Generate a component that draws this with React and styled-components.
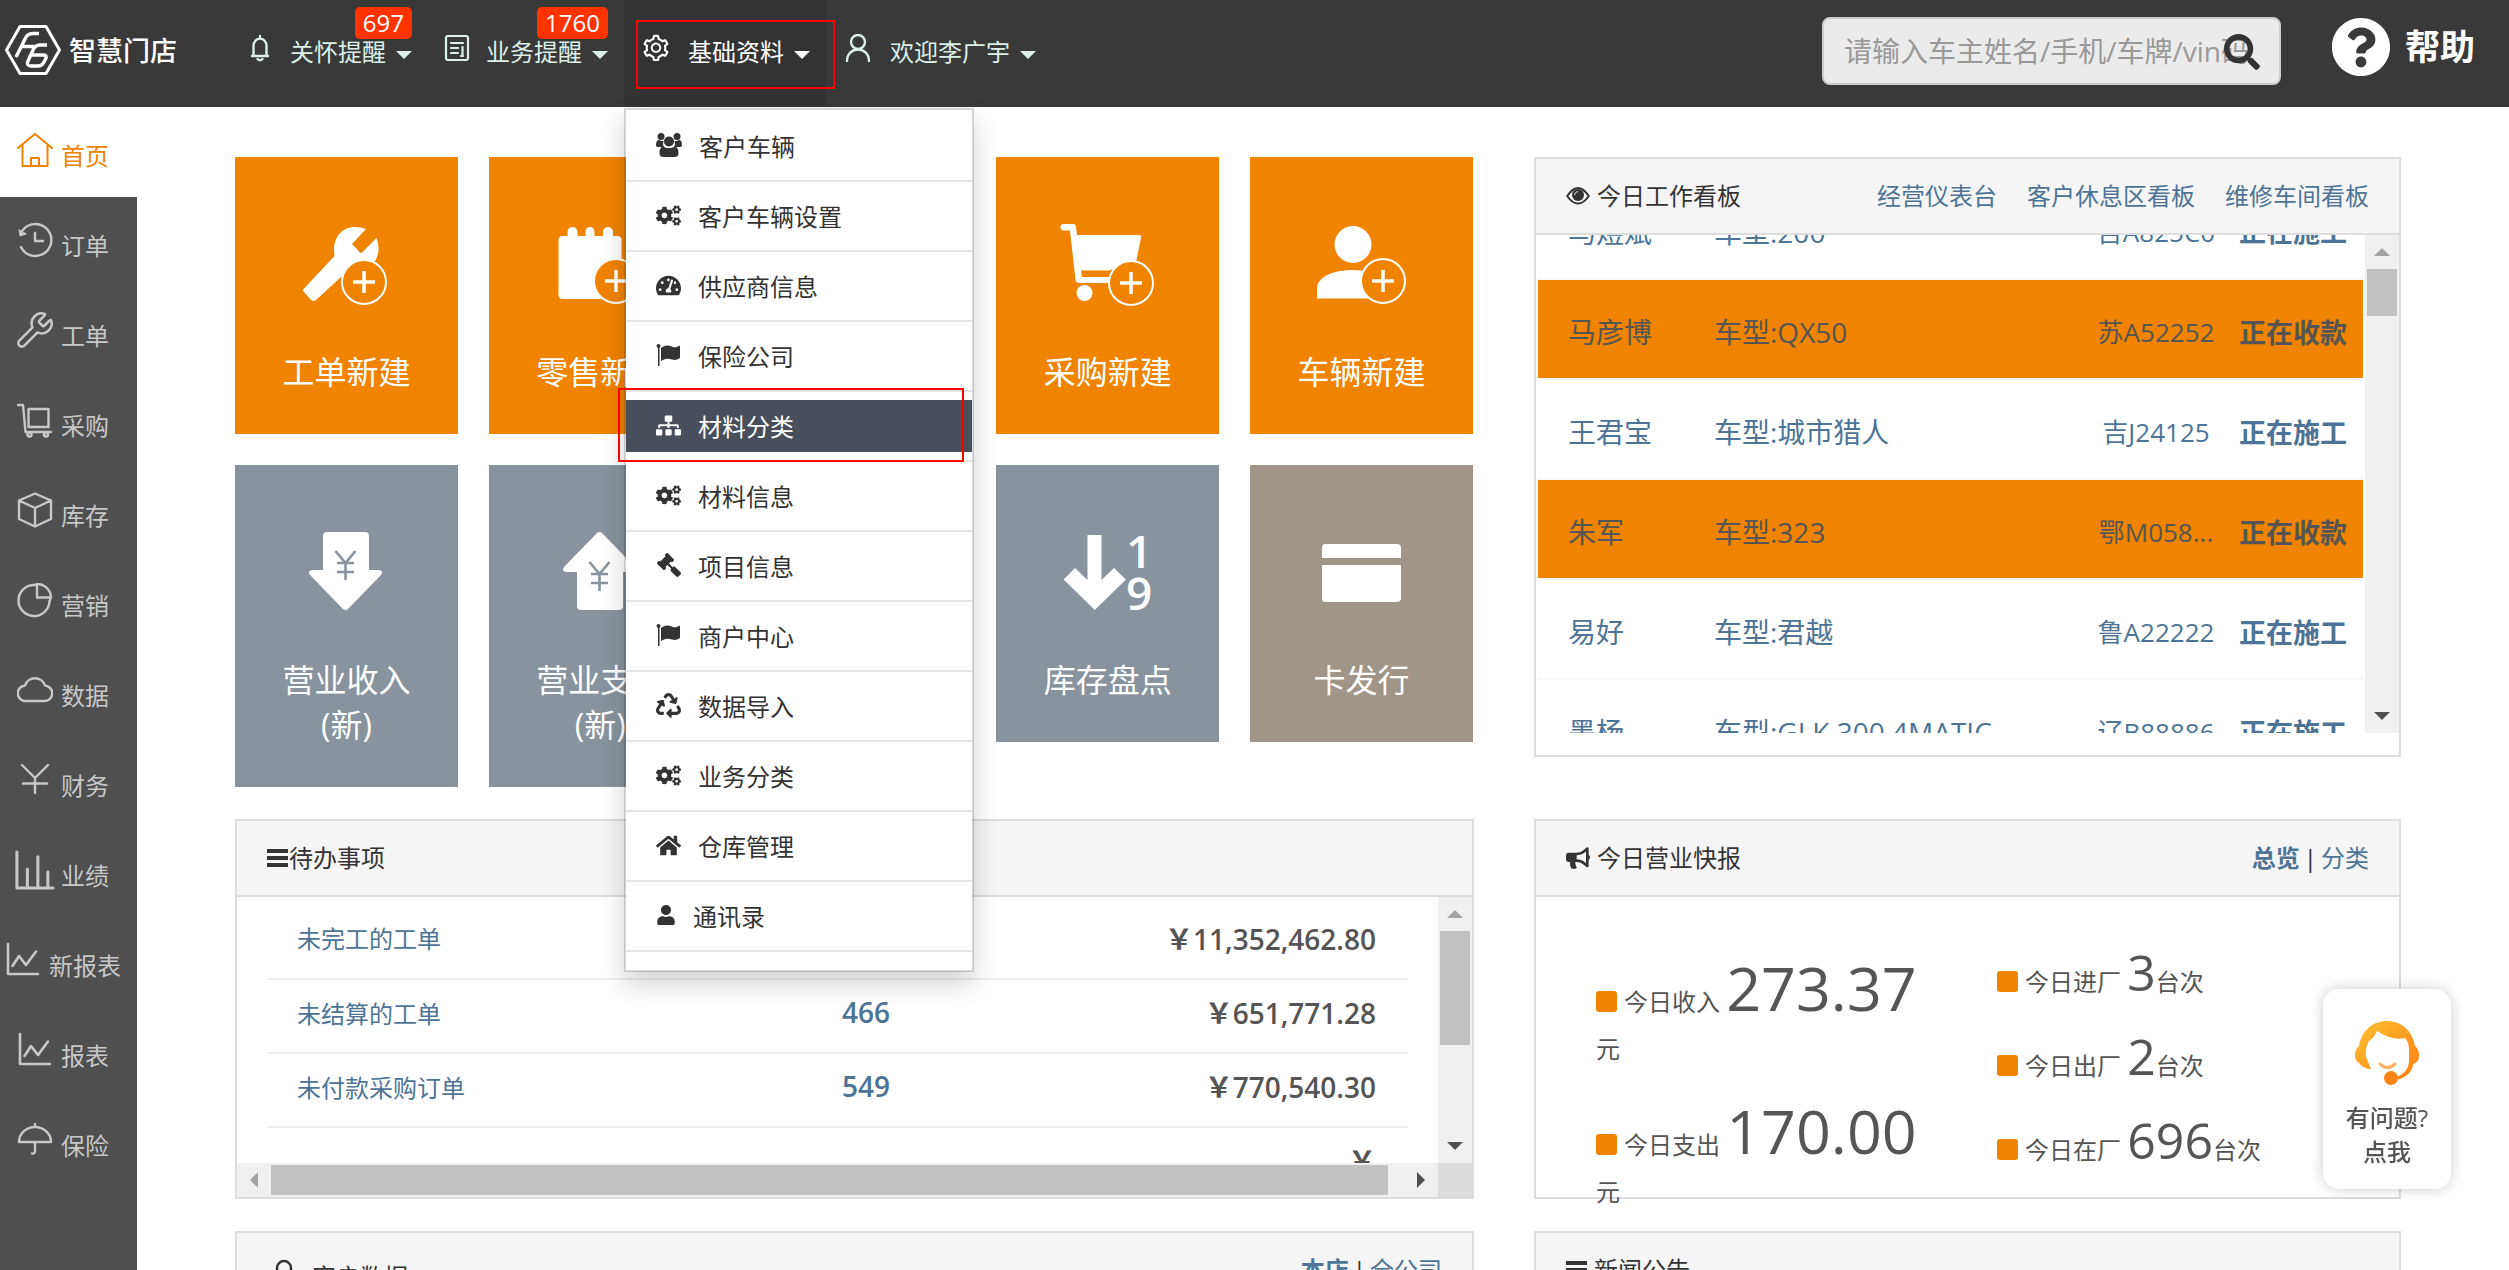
import React, {useLayoutEffect, useRef} from 'react'
import styled, {createGlobalStyle, css} from 'styled-components'
import {
  FaCogs,
  FaTachometerAlt,
  FaSitemap,
  FaGavel,
  FaRecycle,
  FaHome,
  FaUser,
  FaBullhorn,
  FaSearch,
  FaQuestionCircle,
} from 'react-icons/fa'
import {AiOutlineSetting} from 'react-icons/ai'
import {Wrench} from 'lucide-react'

const orange = '#f08300'
const slate = '#88939d'
const taupe = '#9f9689'
const link = '#4d7496'

/* ---------- icons ---------- */

const Line = ({size = 36, w = 2.4, box = 36, children}) => (
  <svg
    width={size}
    height={size}
    viewBox={`0 0 ${box} ${box}`}
    fill="none"
    stroke="currentColor"
    strokeWidth={w}
    strokeLinecap="round"
    strokeLinejoin="round"
    aria-hidden="true"
  >
    {children}
  </svg>
)

const Solid = ({width = 25, height = 24, children}) => (
  <svg
    width={width}
    height={height}
    viewBox={`0 0 ${width} ${height}`}
    fill="currentColor"
    aria-hidden="true"
  >
    {children}
  </svg>
)

const BellIcon = () => (
  <Line size={28} box={28} w={2.4}>
    <path d="M6 22h16M7.500 22V12a6.500 7.500 0 0 1 13 0v10M14 4.500V2M11.500 25q2.500 2.500 5 0" />
  </Line>
)

const DocIcon = () => (
  <Line size={26} box={26} w={2.2}>
    <rect x="2" y="1" width="22" height="24" rx="2" />
    <path d="M7 8h12M7 13h7M7 18h7M18.500 12v9M17 21h2" />
  </Line>
)

const PersonIcon = () => (
  <Line size={28} box={28} w={2.4}>
    <ellipse cx="14" cy="8" rx="7" ry="7" />
    <path d="M3 27c0-7 5-11.500 11-11.500S25 20 25 27" />
  </Line>
)

const HomeIcon = () => (
  <Line w={2}>
    <path d="M1 16 18 2l17 14M5.500 13v21h25V13M14 34v-8h8v8" />
  </Line>
)

const HistoryIcon = () => (
  <Line>
    <path d="M4 11a16 16 0 1 1 0 14M18 11v8h8" />
    <path d="M2 8l1 6 6-2z" fill="currentColor" strokeWidth="1" />
  </Line>
)

const TrolleyIcon = () => (
  <Line>
    <path d="M1 3h5l2.500 27H34M11.500 7h20v18h-20z" />
    <circle cx="12.500" cy="32.500" r="2" />
    <circle cx="29" cy="32.500" r="2" />
  </Line>
)

const CubeIcon = () => (
  <Line>
    <path d="M18 1.500 34 8.500V27l-16 7.500L2 27V8.500zM2 8.500 18 16l16-7.500M18 16v18" />
  </Line>
)

const PieIcon = () => (
  <Line>
    <path d="M17 3a15.500 15.500 0 1 0 15.500 16.500" />
    <path d="M20 2v13.500h14A14 14 0 0 0 20 2zM20 2.500A15 15 0 0 0 17 3M32.500 19.500q1-2 1-4" />
  </Line>
)

const CloudIcon = () => (
  <Line>
    <path d="M9 29a7.500 7.500 0 0 1-1-15.500 10.500 10.500 0 0 1 20 0A7.500 7.500 0 0 1 27 29z" />
  </Line>
)

const YenIcon = () => (
  <Line>
    <path d="M5 3l13 13L31 3M18 16v15M6 21.500h24" />
  </Line>
)

const BarsChartIcon = () => (
  <Line size={42} box={42} w={3.2}>
    <path d="M2 2v38h38M13 20v18M24 7v31M34.500 23v15" />
  </Line>
)

const LineChartIcon = () => (
  <Line w={2.6}>
    <path d="M3 2v30h30M7.500 24l6.500-10 7 9L31 9.500" />
  </Line>
)

const UmbrellaIcon = () => (
  <Line>
    <path d="M2 20a16 15 0 0 1 32 0zM18 2v3M18 20v9q0 3-3 2.500" />
  </Line>
)

const UsersIcon = () => (
  <Solid width={26}>
    <circle cx="5" cy="3.500" r="3.500" />
    <circle cx="21" cy="3.500" r="3.500" />
    <path d="M0 12c0-3 1-5 3-5 2 1 3 1 4.500 1L7 11c0 1 .5 2 1 3H2c-1.500 0-2-1-2-2zM26 12c0-3-1-5-3-5-2 1-3 1-4.500 1l.5 3c0 1-.5 2-1 3h6c1.500 0 2-1 2-2z" />
    <circle cx="13" cy="8.500" r="5" />
    <path d="M3.500 20c0-4 1.500-6.500 4-6.500 3 2 8 2 11 0 2.500 0 4 2.500 4 6.500 0 3-1.500 4-4 4h-11c-2.500 0-4-1-4-4z" />
  </Solid>
)

const FlagIcon = () => (
  <Solid>
    <circle cx="2.500" cy="3" r="2" />
    <path d="M2 4h1.500v19H2zM5 5c6-4 9-2 12-1 2 .8 4 0 7-1.500V15c-3 2-5 2.500-8 1.500S10 15 5 18z" />
  </Solid>
)

const HammerIcon = () => (
  <svg width="25" height="24" viewBox="0 0 25 24" fill="currentColor" aria-hidden="true">
    <g transform="matrix(-1 0 0 1 25 0)">
      <FaGavel size={24} />
    </g>
  </svg>
)

const EyeIcon = () => (
  <Solid width={24} height={20}>
    <path
      d="M1.200 10C6 3 9 2 12 2s6 1 10.800 8C18 17 15 17.500 12 17.500S6 17 1.200 10z"
      fill="none"
      stroke="currentColor"
      strokeWidth="2"
    />
    <circle cx="12" cy="9" r="6" />
    <path d="M8.700 9c0-2 1.300-3.300 3.300-3.300" fill="none" stroke="#f5f5f5" />
  </Solid>
)

const MenuBarsIcon = () => (
  <Solid width={21} height={20}>
    <path d="M0 1h21v4H0zM0 8h21v4H0zM0 15h21v4H0z" />
  </Solid>
)

const LogoIcon = () => (
  <svg width="56" height="50" viewBox="0 0 56 50" fill="none" stroke="#fff" aria-hidden="true">
    <path d="M15 1.500h26L54.500 25 41 48.500H15L1.500 25z" strokeWidth="3" strokeLinejoin="round" />
    <path d="M34 8.500h-6q-6 0-8 5.500L11 32M16 21.500h13" strokeWidth="3.400" />
    <path
      d="M42 20h-7q-5 0-7 5l-5 11q-2 5 3 5h7q4 0 6-4l2-4q1-3-3-3H25"
      strokeWidth="3.400"
    />
  </svg>
)

const Plus = ({x, y, r = 22}) => (
  <>
    <circle cx={x} cy={y} r={r} fill={orange} stroke="#fff" strokeWidth="2" />
    <path d={`M${x - 11} ${y}h22M${x} ${y - 11}v22`} stroke="#fff" strokeWidth="3.500" />
  </>
)

const TileArt = ({children}) => (
  <svg
    width="96"
    height="80"
    viewBox="0 0 96 80"
    fill="#fff"
    overflow="visible"
    aria-hidden="true"
  >
    {children}
  </svg>
)

const WrenchArt = () => (
  <TileArt>
    <path d="M5.500 63 36.500 30C34 14 42 1 57 1q6 0 11 2L54 18l9 9.600L78.500 12q5 13-2 24L43 51 18 74q-2 2-5 0L6 66q-2-1.500-.5-3z" />
    <Plus x={66} y={56} />
  </TileArt>
)

const CalendarArt = () => (
  <TileArt>
    <rect x="6.500" y="10" width="63" height="63" rx="4" />
    <rect x="15.500" y="1" width="10" height="14" rx="5" />
    <rect x="33.500" y="1" width="9" height="14" rx="4.500" />
    <rect x="51" y="1" width="10" height="14" rx="5" />
    <Plus x={64} y={55} />
  </TileArt>
)

const CartArt = () => (
  <TileArt>
    <path d="M3.500-2H13q3 0 3 3l1 8h62q3 0 2 3l-5 24-27 8.500H21l1 6.500h27V57H19q-3 0-3.500-3L10 4.500H3.500q-3 0-3-3.200T3.500-2z" />
    <circle cx="24.500" cy="67" r="8" />
    <Plus x={71} y={57} />
  </TileArt>
)

const CustomerArt = () => (
  <TileArt>
    <circle cx="39" cy="18.500" r="18.500" />
    <path d="M3 72.500V61C5 50 20 44 39 44q9 0 16 2l8 26.500z" />
    <Plus x={69} y={55} />
  </TileArt>
)

const YuanSign = ({y}) => (
  <path
    d={`M37.500 ${y}l10 12 10-12M47.500 ${y + 12}v17M39 ${y + 12}h17M39 ${y + 21}h17`}
    fill="none"
    stroke={slate}
    strokeWidth="2.600"
  />
)

const IncomeArt = () => (
  <TileArt>
    <path d="M29-2h38q4 0 4 4v34h10q5 1 2 5L50 75q-2.500 2-5 0L12 41q-3-4 2-5h11V2q0-4 4-4z" />
    <YuanSign y={17} />
  </TileArt>
)

const ExpenseArt = () => (
  <TileArt>
    <path d="M29 76h38q4 0 4-4V38h10q5-1 2-5L50-1q-2.500-2-5 0L12 33q-3 4 2 5h11v34q0 4 4 4z" />
    <YuanSign y={28} />
  </TileArt>
)

const StockArt = () => (
  <TileArt>
    <path d="M27.500 1h14v45L54 34l12 11.500L34.800 76 3.600 45.500 15 34l12.500 12z" />
    <SvgDigit x="66" y="34">
      1
    </SvgDigit>
    <SvgDigit x="66" y="76">
      9
    </SvgDigit>
  </TileArt>
)

const CardArt = () => (
  <TileArt>
    <path d="M11 10h72q4 0 4 4v10H8V14q0-4 3-4zM8 31h79v33q0 4-4 4H11q-3 0-3-4z" />
  </TileArt>
)

const HeadsetArt = () => (
  <svg width="64" height="64" viewBox="0 0 64 64" fill="none" aria-hidden="true">
    <defs>
      <linearGradient id="hair" x1="0" y1="0" x2="1" y2="1">
        <stop offset="0" stopColor="#ffc233" />
        <stop offset="1" stopColor="#ff7d12" />
      </linearGradient>
    </defs>
    <path
      d="M4 25C7 9 18 0 32 0s25 9 28 25q4 3 4 9 0 8-6 9-1 12-17 16v-3q12-4 13-15V28q0-6-4-11-13 3-28-7-3 7-8 10-4 6-3 16l5 12q-7 0-12-6-4-2-4-8 0-6 4-9z"
      fill="url(#hair)"
    />
    <path d="M25 43q7 7 15 0" stroke="#ffb061" strokeWidth="3" strokeLinecap="round" />
    <circle cx="36" cy="57" r="7" fill="#ff8417" />
  </svg>
)

/* ---------- data ---------- */

const sideItems = [
  {text: '首页', Icon: HomeIcon, active: true},
  {text: '订单', Icon: HistoryIcon},
  {text: '工单', Icon: () => <Wrench size={40} strokeWidth={1.5} />},
  {text: '采购', Icon: TrolleyIcon},
  {text: '库存', Icon: CubeIcon},
  {text: '营销', Icon: PieIcon},
  {text: '数据', Icon: CloudIcon},
  {text: '财务', Icon: YenIcon},
  {text: '业绩', Icon: BarsChartIcon},
  {text: '新报表', Icon: LineChartIcon},
  {text: '报表', Icon: LineChartIcon},
  {text: '保险', Icon: UmbrellaIcon},
]

const menuItems = [
  {text: '客户车辆', Icon: UsersIcon},
  {text: '客户车辆设置', Icon: FaCogs},
  {text: '供应商信息', Icon: FaTachometerAlt},
  {text: '保险公司', Icon: FlagIcon},
  {text: '材料分类', Icon: FaSitemap, active: true},
  {text: '材料信息', Icon: FaCogs},
  {text: '项目信息', Icon: HammerIcon},
  {text: '商户中心', Icon: FlagIcon},
  {text: '数据导入', Icon: FaRecycle},
  {text: '业务分类', Icon: FaCogs},
  {text: '仓库管理', Icon: FaHome},
  {text: '通讯录', Icon: FaUser},
]

const tiles = [
  {lines: ['工单新建'], Art: WrenchArt, color: orange},
  {lines: ['零售新建'], Art: CalendarArt, color: orange},
  null,
  {lines: ['采购新建'], Art: CartArt, color: orange},
  {lines: ['车辆新建'], Art: CustomerArt, color: orange},
  {lines: ['营业收入', '(新)'], Art: IncomeArt, color: slate},
  {lines: ['营业支出', '(新)'], Art: ExpenseArt, color: slate},
  null,
  {lines: ['库存盘点'], Art: StockArt, color: slate},
  {lines: ['卡发行'], Art: CardArt, color: taupe},
]

const boardRows = [
  {name: '马煜斌', model: '200', plate: '吉A825C0', status: '正在施工'},
  {name: '马彦博', model: 'QX50', plate: '苏A52252', status: '正在收款', paying: true},
  {name: '王君宝', model: '城市猎人', plate: '吉J24125', status: '正在施工'},
  {name: '朱军', model: '323', plate: '鄂M058...', status: '正在收款', paying: true},
  {name: '易好', model: '君越', plate: '鲁A22222', status: '正在施工'},
  {name: '墨杨', model: 'GLK 300 4MATIC', plate: '辽B88886', status: '正在施工'},
]

const todoRows = [
  {name: '未完工的工单', count: '', amount: '￥11,352,462.80'},
  {name: '未结算的工单', count: '466', amount: '￥651,771.28'},
  {name: '未付款采购订单', count: '549', amount: '￥770,540.30'},
  {name: '', count: '', amount: '￥'},
]

const moneyStats = [
  {label: '今日收入', value: '273.37'},
  {label: '今日支出', value: '170.00'},
]

const visitStats = [
  {label: '今日进厂', value: '3'},
  {label: '今日出厂', value: '2'},
  {label: '今日在厂', value: '696'},
]

/* ---------- page ---------- */

const ScrollBarY = ({thumb}) => (
  <TrackY>
    <ScrollButton aria-label="向上">
      <Arrow $dir="up" $dim />
    </ScrollButton>
    <ThumbY $size={thumb} />
    <ScrollButton $end aria-label="向下">
      <Arrow $dir="down" />
    </ScrollButton>
  </TrackY>
)

const NavEntry = ({icon, iconWidth, text, badge, active, children}) => (
  <NavItem $active={active}>
    <NavButton>
      <NavIcon $width={iconWidth}>{icon}</NavIcon>
      <NavText>{text}</NavText>
      <Caret />
    </NavButton>
    {badge && <Badge>{badge}</Badge>}
    {children}
  </NavItem>
)

const SettingsMenu = () => (
  <Menu>
    {menuItems.map(({text, Icon, active}) => (
      <MenuRow key={text}>
        <MenuLink href="#" $active={active}>
          <Icon size={text === '通讯录' ? 20 : 25} />
          {text}
        </MenuLink>
        {active && <MenuMark />}
      </MenuRow>
    ))}
  </Menu>
)

const WorkBoard = () => {
  const viewport = useRef(null)

  useLayoutEffect(() => {
    viewport.current.scrollTop = 56
  }, [])

  return (
    <Panel>
      <PanelHeader>
        <PanelTitle>
          <EyeIcon />
          今日工作看板
        </PanelTitle>
        <HeaderLinks>
          <TextLink href="#">经营仪表台</TextLink>
          <TextLink href="#">客户休息区看板</TextLink>
          <TextLink href="#">维修车间看板</TextLink>
        </HeaderLinks>
      </PanelHeader>
      <BoardBody>
        <BoardViewport ref={viewport}>
          <BoardTable>
            <tbody>
              {boardRows.map(row => (
                <BoardRow key={row.name} $paying={row.paying}>
                  <NameCell>{row.name}</NameCell>
                  <BoardCell>车型:{row.model}</BoardCell>
                  <PlateCell>{row.plate}</PlateCell>
                  <StatusCell>{row.status}</StatusCell>
                </BoardRow>
              ))}
            </tbody>
          </BoardTable>
        </BoardViewport>
        <ScrollBarY thumb={47} />
      </BoardBody>
    </Panel>
  )
}

const TodoPanel = () => (
  <Panel>
    <PanelHeader>
      <PanelTitle $tight>
        <MenuBarsIcon />
        待办事项
      </PanelTitle>
    </PanelHeader>
    <TodoBody>
      <TodoViewport>
        <TodoTable>
          <tbody>
            {todoRows.map(row => (
              <tr key={row.amount}>
                <TodoName>{row.name && <TextLink href="#">{row.name}</TextLink>}</TodoName>
                <TodoCount>{row.count}</TodoCount>
                <TodoAmount>{row.amount}</TodoAmount>
              </tr>
            ))}
          </tbody>
        </TodoTable>
      </TodoViewport>
      <ScrollBarY thumb={114} />
    </TodoBody>
    <TrackX>
      <ScrollButton aria-label="向左">
        <Arrow $dir="left" $dim />
      </ScrollButton>
      <TrackRail>
        <ThumbX />
      </TrackRail>
      <ScrollButton aria-label="向右">
        <Arrow $dir="right" />
      </ScrollButton>
      <Corner />
    </TrackX>
  </Panel>
)

const DailyPanel = () => (
  <Panel>
    <PanelHeader>
      <PanelTitle>
        <FaBullhorn size={24} />
        今日营业快报
      </PanelTitle>
      <Switcher>
        <TextLink href="#" $bold>
          总览
        </TextLink>
        <span>|</span>
        <TextLink href="#">分类</TextLink>
      </Switcher>
    </PanelHeader>
    <DailyBody>
      <MoneyColumn>
        {moneyStats.map(({label, value}) => (
          <Stat key={label}>
            <Dot />
            {label} <Money>{value}</Money> 元
          </Stat>
        ))}
      </MoneyColumn>
      <VisitColumn>
        {visitStats.map(({label, value}) => (
          <Stat key={label}>
            <Dot />
            {label} <Visits>{value}</Visits>
            台次
          </Stat>
        ))}
      </VisitColumn>
    </DailyBody>
  </Panel>
)

export default function App() {
  return (
    <Page>
      <GlobalStyle />
      <TopBar>
        <Brand href="#">
          <LogoIcon />
          智慧门店
        </Brand>
        <Nav>
          <NavEntry icon={<BellIcon />} iconWidth={28} text="关怀提醒" badge="697" />
          <NavEntry icon={<DocIcon />} iconWidth={26} text="业务提醒" badge="1760" />
          <NavEntry icon={<AiOutlineSetting size={30} />} iconWidth={32} text="基础资料" active>
            <SettingsMenu />
            <NavMark />
          </NavEntry>
          <NavEntry icon={<PersonIcon />} iconWidth={32} text="欢迎李广宇" />
        </Nav>
        <SearchBox>
          <SearchInput
            type="text"
            aria-label="搜索"
            placeholder="请输入车主姓名/手机/车牌/vin码"
          />
          <SearchButton aria-label="搜索">
            <FaSearch size={36} />
          </SearchButton>
        </SearchBox>
        <Help href="#">
          <FaQuestionCircle size={60} />
          帮助
        </Help>
      </TopBar>
      <Content>
        <Sidebar>
          {sideItems.map(({text, Icon, active}) => (
            <SideLink key={text} href="#" $active={active}>
              <SideIcon>
                <Icon />
              </SideIcon>
              <SideText>{text}</SideText>
            </SideLink>
          ))}
        </Sidebar>
        <Dashboard>
          <Tiles>
            {tiles.map((tile, i) =>
              tile ? (
                <Tile key={tile.lines[0]} $color={tile.color}>
                  <tile.Art />
                  <TileText>
                    {tile.lines.map(line => (
                      <span key={line}>{line}</span>
                    ))}
                  </TileText>
                </Tile>
              ) : (
                <EmptySlot key={i} />
              ),
            )}
          </Tiles>
          <WorkBoard />
          <TodoPanel />
          <DailyPanel />
          <Panel>
            <PanelHeader>
              <PanelTitle $low>
                <Line size={38} box={38} w={2.4}>
                  <circle cx="17" cy="17" r="7" />
                  <path d="M8 37c0-7 4-12 9-12s9 5 9 12" />
                </Line>
                客户数据
              </PanelTitle>
              <Switcher>
                <TextLink href="#" $bold>
                  本店
                </TextLink>
                <span>|</span>
                <TextLink href="#">全公司</TextLink>
              </Switcher>
            </PanelHeader>
            <BlankBody />
          </Panel>
          <Panel>
            <PanelHeader>
              <PanelTitle>
                <MenuBarsIcon />
                新闻公告
              </PanelTitle>
            </PanelHeader>
            <BlankBody />
          </Panel>
        </Dashboard>
      </Content>
      <Support>
        <HeadsetArt />
        <SupportText>
          <span>有问题?</span>
          <span>点我</span>
        </SupportText>
      </Support>
    </Page>
  )
}

/* ---------- styles ---------- */

const GlobalStyle = createGlobalStyle`
  * {
    box-sizing: border-box;
  }
  body {
    margin: 0;
    background-color: #fff;
    color: #333;
    font-family: 'Open Sans', 'Noto Sans CJK SC', sans-serif;
    font-size: 24px;
  }
  button {
    font-family: inherit;
    font-size: inherit;
    border: 0;
    padding: 0;
    cursor: pointer;
  }
  a {
    text-decoration: none;
  }
`

const Page = styled.div`
  display: flex;
  flex-direction: column;
  height: 100vh;
  overflow: hidden;
`

const TopBar = styled.header`
  display: flex;
  flex-shrink: 0;
  height: 107px;
  padding-right: 34px;
  background-color: #393939;
  position: relative;
  z-index: 2;
`

const Brand = styled.a`
  display: flex;
  align-items: center;
  gap: 8px;
  width: 230px;
  height: 99px;
  padding-left: 5px;
  color: #fff;
  font-size: 27px;
  font-weight: 500;
`

const Nav = styled.ul`
  display: flex;
  flex: 1;
  margin: 0;
  padding: 0;
  list-style: none;
`

const NavItem = styled.li`
  position: relative;
  color: ${props => (props.$active ? '#fff' : '#dcefe8')};
  background-color: ${props => (props.$active ? '#333' : 'transparent')};
`

const NavButton = styled.button`
  display: flex;
  align-items: center;
  height: 100px;
  padding: 0 16px;
  color: inherit;
  background-color: transparent;
`

const NavIcon = styled.span`
  display: flex;
  justify-content: center;
  width: ${props => props.$width}px;
  margin-right: 16px;
  padding-bottom: 4px;
`

const NavText = styled.span`
  margin-right: 10px;
  white-space: nowrap;
`

const Caret = styled.span`
  margin-top: 10px;
  border: 8px solid transparent;
  border-top-color: currentColor;
  border-bottom: 0;
`

const Badge = styled.span`
  position: absolute;
  top: 7px;
  right: 16px;
  padding: 0 8px;
  border-radius: 5px;
  background-color: #ff3300;
  color: #fff;
  line-height: 32px;
`

const redMark = css`
  position: absolute;
  border: 2px solid #f00;
  pointer-events: none;
`

const NavMark = styled.div`
  ${redMark}
  top: 20px;
  left: 12px;
  width: 199px;
  height: 69px;
  z-index: 1;
`

const Menu = styled.ul`
  position: absolute;
  top: 108px;
  left: 0;
  width: 350px;
  margin: 0;
  padding: 2px 0 18px;
  list-style: none;
  background-color: #fff;
  background-clip: padding-box;
  border: 2px solid rgba(0, 0, 0, 0.15);
  box-shadow: 0 12px 24px rgba(0, 0, 0, 0.175);
`

const MenuRow = styled.li`
  position: relative;
  padding: 8px 0;
  border-bottom: 2px solid #e5e5e5;
`

const MenuLink = styled.a`
  display: flex;
  align-items: center;
  gap: 17px;
  height: 52px;
  padding: 0 0 2px 30px;
  color: ${props => (props.$active ? '#fff' : '#333')};
  background-color: ${props => (props.$active ? '#484e5a' : 'transparent')};
`

const MenuMark = styled.div`
  ${redMark}
  top: -4px;
  left: -8px;
  right: 8px;
  bottom: -2px;
`

const SearchBox = styled.div`
  display: flex;
  position: relative;
  width: 459px;
  height: 68px;
  margin: 17px 50px 0 0;
`

const SearchInput = styled.input`
  width: 100%;
  padding: 0 20px;
  border: 2px solid #ccc;
  border-radius: 8px;
  background-color: #ebebeb;
  font-family: inherit;
  font-size: 28px;
  &::placeholder {
    color: #999;
  }
`

const SearchButton = styled.button`
  display: flex;
  position: absolute;
  top: 17px;
  right: 21px;
  color: #333;
  background-color: transparent;
`

const Help = styled.a`
  display: flex;
  align-items: center;
  gap: 14px;
  height: 94px;
  color: #fff;
  font-size: 35px;
  font-weight: 700;
  line-height: 40px;
`

const Content = styled.div`
  display: flex;
  flex: 1;
  min-height: 0;
`

const Sidebar = styled.nav`
  flex-shrink: 0;
  width: 137px;
  background-color: #4f4f4f;
`

const SideLink = styled.a`
  display: flex;
  justify-content: center;
  gap: 6px;
  height: 90px;
  padding-right: 13px;
  color: ${props => (props.$active ? orange : '#c8c8c8')};
  background-color: ${props => (props.$active ? '#fff' : 'transparent')};
`

const SideIcon = styled.span`
  display: flex;
  align-items: center;
  justify-content: center;
  width: 40px;
  height: 86px;
`

const SideText = styled.span`
  line-height: 98px;
`

const Dashboard = styled.main`
  display: grid;
  flex: 1;
  grid-template-columns: minmax(0, 1239fr) minmax(0, 867fr);
  align-items: start;
  align-content: start;
  gap: 32px 60px;
  padding: 50px 108px 0 98px;
`

const Tiles = styled.div`
  display: grid;
  grid-template-columns: repeat(5, 1fr);
  align-items: start;
  gap: 31px;
  padding-right: 1px;
`

const Tile = styled.button`
  display: flex;
  flex-direction: column;
  align-items: center;
  gap: 43px;
  padding: 69px 0 40px;
  background-color: ${props => props.$color};
`

const TileText = styled.span`
  display: flex;
  flex-direction: column;
  color: #fff;
  font-size: 32px;
  line-height: 45px;
`

const EmptySlot = styled.div``

const SvgDigit = styled.text`
  font-size: 46px;
  font-weight: 600;
`

const Panel = styled.section`
  border: 2px solid #ddd;
  background-color: #fff;
`

const PanelHeader = styled.div`
  display: flex;
  align-items: center;
  justify-content: space-between;
  height: 76px;
  padding: 0 30px;
  border-bottom: 2px solid #ddd;
  background-color: #f5f5f5;
`

const PanelTitle = styled.h2`
  display: flex;
  align-items: ${props => (props.$low ? 'flex-end' : 'center')};
  gap: ${props => (props.$tight ? 1 : 7)}px;
  margin: 0;
  font-size: 24px;
  font-weight: 400;
  line-height: 24px;
`

const HeaderLinks = styled.div`
  display: flex;
  gap: 30px;
  line-height: 24px;
`

const TextLink = styled.a`
  color: ${link};
  font-weight: ${props => (props.$bold ? 700 : 400)};
`

const Switcher = styled.div`
  display: flex;
  gap: 4px;
  line-height: 24px;
  white-space: nowrap;
`

const BlankBody = styled.div`
  height: 300px;
`

const BoardBody = styled.div`
  display: flex;
  height: 520px;
  padding-bottom: 22px;
`

const BoardViewport = styled.div`
  flex: 1;
  padding: 0 2px;
  overflow: hidden;
`

const BoardTable = styled.table`
  width: 100%;
  table-layout: fixed;
  border-collapse: collapse;
`

const BoardRow = styled.tr`
  height: 100px;
  color: ${props => (props.$paying ? '#555' : link)};
  background-color: ${props => (props.$paying ? orange : '#fff')};
`

const BoardCell = styled.td`
  padding: 4px 0 0;
  border-bottom: 2px solid #f7f7f7;
  font-size: 28px;
  white-space: nowrap;
`

const NameCell = styled(BoardCell)`
  width: 176px;
  padding-left: 30px;
`

const PlateCell = styled(BoardCell)`
  width: 142px;
  font-size: 26px;
  text-align: center;
`

const StatusCell = styled(BoardCell)`
  width: 136px;
  padding-left: 12px;
  font-size: 27px;
  font-weight: 700;
`

const TodoBody = styled.div`
  display: flex;
  height: 266px;
`

const TodoViewport = styled.div`
  flex: 1;
  padding: 8px 30px 0;
  overflow: hidden;
`

const TodoTable = styled.table`
  width: 100%;
  table-layout: fixed;
  border-collapse: collapse;
  tr {
    height: 74px;
  }
  td {
    border-bottom: 2px solid #eee;
  }
`

const TodoName = styled.td`
  width: 44%;
  padding: 0 0 8px 30px;
`

const TodoCount = styled.td`
  width: 17%;
  padding: 0 0 8px;
  color: ${link};
  font-size: 28px;
  font-weight: 600;
  text-align: center;
`

const TodoAmount = styled.td`
  padding: 0 32px 8px 0;
  color: #555;
  font-size: 28px;
  font-weight: 600;
  text-align: right;
`

const TrackY = styled.div`
  display: flex;
  flex-direction: column;
  flex-shrink: 0;
  width: 34px;
  background-color: #f0f0f0;
`

const ScrollButton = styled.button`
  display: flex;
  align-items: center;
  justify-content: center;
  flex-shrink: 0;
  width: 34px;
  height: 34px;
  margin-top: ${props => (props.$end ? 'auto' : 0)};
  background-color: transparent;
`

const arrowSides = {
  up: 'border-top: 0; border-bottom-color: currentColor;',
  down: 'border-bottom: 0; border-top-color: currentColor;',
  left: 'border-left: 0; border-right-color: currentColor;',
  right: 'border-right: 0; border-left-color: currentColor;',
}

const Arrow = styled.span`
  border: 8px solid transparent;
  color: ${props => (props.$dim ? '#a3a3a3' : '#505050')};
  ${props => arrowSides[props.$dir]}
`

const ThumbY = styled.div`
  height: ${props => props.$size}px;
  margin: 0 2px;
  background-color: #c1c1c1;
`

const TrackX = styled.div`
  display: flex;
  height: 34px;
  background-color: #f0f0f0;
`

const TrackRail = styled.div`
  flex: 1;
  padding: 2px 16px 2px 0;
`

const ThumbX = styled.div`
  height: 30px;
  background-color: #c1c1c1;
`

const Corner = styled.div`
  width: 34px;
  background-color: #dcdcdc;
`

const DailyBody = styled.div`
  display: grid;
  grid-template-columns: 401fr 402fr;
  height: 300px;
  padding-left: 60px;
  color: #555;
`

const StatColumn = styled.div`
  display: flex;
  flex-direction: column;
`

const MoneyColumn = styled(StatColumn)`
  gap: 49px;
  padding: 81px 66px 0 0;
`

const VisitColumn = styled(StatColumn)`
  gap: 37px;
  padding-top: 61px;
`

const Stat = styled.p`
  margin: 0;
  line-height: 47px;
`

const Dot = styled.span`
  display: inline-block;
  width: 21px;
  height: 21px;
  margin-right: 7px;
  border-radius: 3px;
  background-color: ${orange};
  vertical-align: -1px;
`

const Money = styled.span`
  font-size: 61px;
  line-height: 0;
`

const Visits = styled.span`
  font-size: 50px;
  line-height: 0;
`

const Support = styled.button`
  position: fixed;
  right: 58px;
  bottom: 81px;
  display: flex;
  flex-direction: column;
  align-items: center;
  gap: 16px;
  width: 128px;
  padding: 32px 0 20px;
  border-radius: 16px;
  background-color: #fff;
  box-shadow: 0 0 14px rgba(0, 0, 0, 0.2);
`

const SupportText = styled.span`
  display: flex;
  flex-direction: column;
  color: #555;
  font-weight: 500;
  line-height: 34px;
`
